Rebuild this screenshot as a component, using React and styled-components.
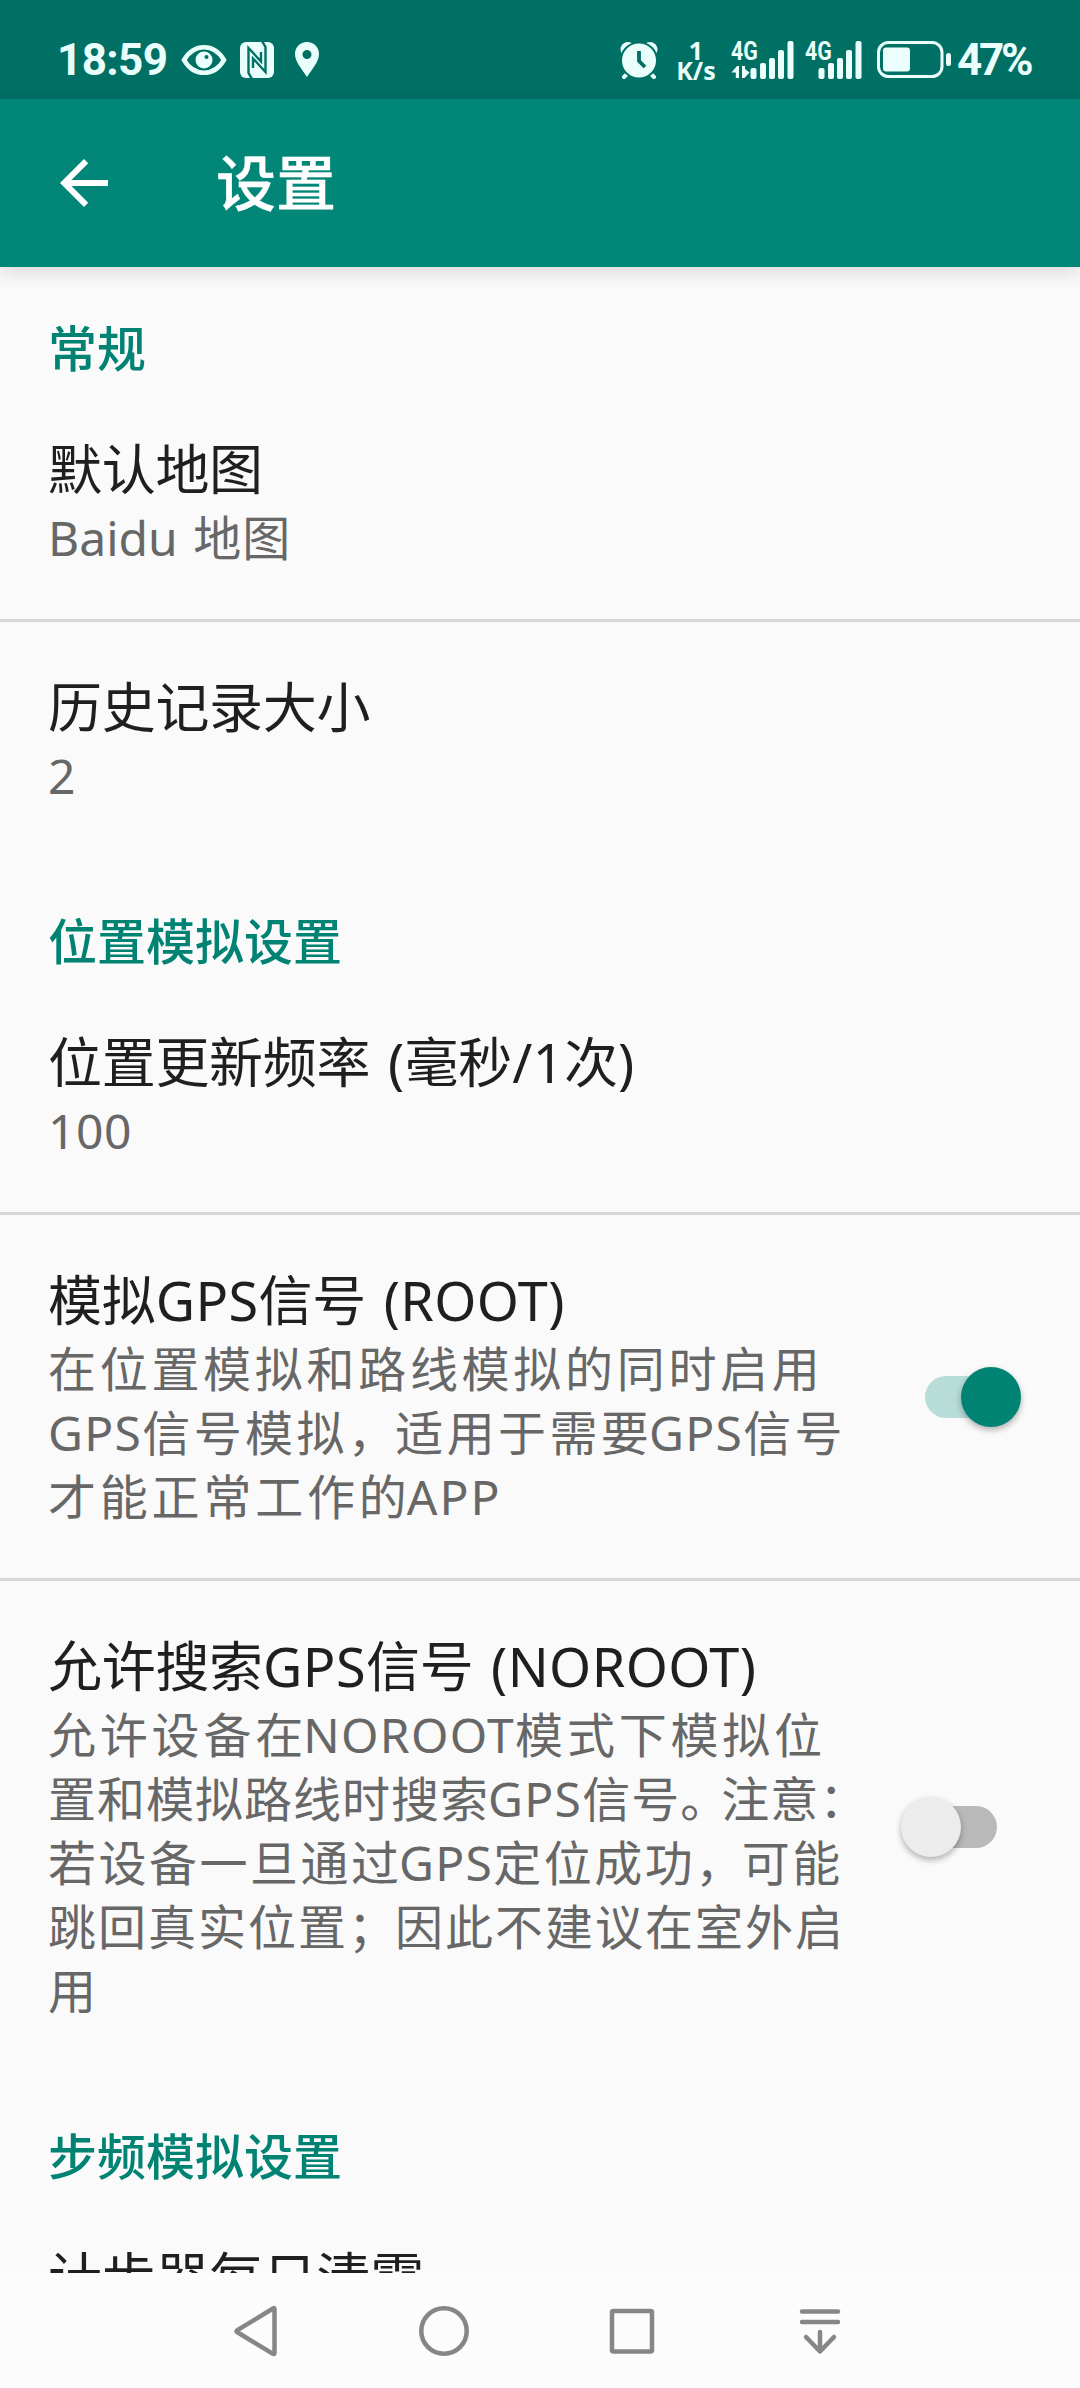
import React from "react";
import styled, { createGlobalStyle } from "styled-components";

const GlobalStyle = createGlobalStyle`
  * {
    box-sizing: border-box;
  }

  body {
    margin: 0;
    background-color: #fafafa;
    font-family: "Noto Sans", "Noto Sans CJK SC", sans-serif;
  }
`;

const Screen = styled.div`
  width: 1080px;
  height: 2388px;
  display: flex;
  flex-direction: column;
  overflow: hidden;
  background-color: #fafafa;
`;

const StatusBar = styled.div`
  height: 99px;
  flex-shrink: 0;
  padding: 20px 47px 0 57px;
  display: flex;
  align-items: center;
  justify-content: space-between;
  background-color: #007065;
  color: #eafffc;
  font-family: Roboto, sans-serif;
`;

const StatusGroup = styled.div`
  display: flex;
  align-items: center;
`;

const Clock = styled.span`
  width: 124px;
  font-size: 44px;
  font-weight: 700;
  line-height: 60px;
  letter-spacing: -0.6px;
  white-space: nowrap;
`;

const StatusIcon = styled.svg`
  display: block;
  flex-shrink: 0;
  margin-left: ${(props) => props.$gap || 0}px;
`;

const Speed = styled.div`
  width: 42px;
  margin-left: 17px;
  display: flex;
  flex-direction: column;
  align-items: center;
  font-family: "Noto Sans", sans-serif;
  font-size: 25px;
  font-weight: 700;
  line-height: 20px;
`;

const Signal = styled.div`
  width: 63px;
  height: 38px;
  margin-left: ${(props) => props.$gap}px;
  display: grid;
`;

const SignalLabel = styled.span`
  grid-area: 1 / 1;
  margin-left: ${(props) => props.$indent || 0}px;
  font-size: 26px;
  font-weight: 700;
  line-height: 20px;
  transform: scaleX(0.82);
  transform-origin: left;
`;

const SignalBars = styled.svg`
  grid-area: 1 / 1;
`;

const Percent = styled.span`
  width: 76px;
  margin-left: 5px;
  font-size: 44px;
  font-weight: 700;
  line-height: 60px;
  letter-spacing: -3.2px;
  white-space: nowrap;
`;

const AppBar = styled.header`
  height: 168px;
  flex-shrink: 0;
  padding-left: 60px;
  display: flex;
  align-items: center;
  background-color: #018677;
  box-shadow: 0 4px 20px rgba(0, 0, 0, 0.15);
  z-index: 1;
`;

const Title = styled.h1`
  margin: 0 0 0 108px;
  color: white;
  font-size: 60px;
  font-weight: 500;
  line-height: 80px;
  -webkit-text-stroke: 0.4px white;
`;

const List = styled.main`
  flex: 1;
  min-height: 0;
  overflow: hidden;
`;

const SectionTitle = styled.h2`
  margin: 0;
  padding: 49px 48px 4px;
  color: #018374;
  font-size: 49px;
  font-weight: 500;
  line-height: 64px;
`;

const Row = styled.div`
  padding-left: 48px;
  display: flex;
  align-items: center;
  border-bottom: 3px solid ${(props) => (props.$last ? "transparent" : "#d6d6d6")};
`;

const RowText = styled.div`
  width: 853px;
  padding: 53px 0 49px;
`;

const RowTitle = styled.div`
  margin-bottom: 5px;
  color: #1f1f1f;
  font-size: 54px;
  line-height: 64px;
  letter-spacing: -0.3px;
  white-space: pre;
`;

const Line = styled.div`
  height: 64px;
  color: #676767;
  font-size: 48px;
  line-height: 64px;
  letter-spacing: ${(props) => props.$spacing}px;
  white-space: pre;
`;

const Latin = styled.span`
  margin-left: ${(props) => -props.$pull}px;
  letter-spacing: ${(props) => props.$spacing}px;
  word-spacing: 3px;
`;

const Mark = styled.span`
  letter-spacing: ${(props) => props.$spacing}px;
`;

const Switch = styled.div`
  width: 120px;
  height: 60px;
  display: flex;
  align-items: center;
  justify-content: center;
`;

const Track = styled.div`
  width: 72px;
  height: 42px;
  display: flex;
  align-items: center;
  justify-content: ${(props) => (props.$on ? "flex-end" : "flex-start")};
  border-radius: 21px;
  background-color: ${(props) => (props.$on ? "#b8dcd8" : "#b9b9b9")};
`;

const Thumb = styled.div`
  width: 60px;
  height: 60px;
  flex-shrink: 0;
  margin: 0 -24px;
  border-radius: 50%;
  background-color: ${(props) => (props.$on ? "#018374" : "#ececec")};
  box-shadow: 0 3px 6px rgba(0, 0, 0, 0.3);
`;

const NavBar = styled.nav`
  height: 115px;
  flex-shrink: 0;
  padding-right: 4px;
  display: flex;
  align-items: center;
  justify-content: center;
  gap: 128px;
  background-color: #fcfcfc;
`;

const NavIcon = styled.svg`
  width: 60px;
  height: 60px;
  fill: none;
  stroke: #868686;
  stroke-width: 4.5;
  stroke-linecap: round;
  stroke-linejoin: round;
`;

const sections = [
  {
    title: "常规",
    rows: [
      { title: "默认地图", lines: [["Baidu 地图", 1, 0]] },
      { title: "历史记录大小", lines: [["2", 0, 0]] },
    ],
  },
  {
    title: "位置模拟设置",
    rows: [
      { title: "位置更新频率 (毫秒/1次)", lines: [["100", 0, 0.5]] },
      {
        title: "模拟GPS信号 (ROOT)",
        lines: [
          ["在位置模拟和路线模拟的同时启用", 3.7, 1.3],
          ["GPS信号模拟，适用于需要GPS信号", 3.4, 1.3],
          ["才能正常工作的APP", 3.8, 2],
        ],
        on: true,
      },
      {
        title: "允许搜索GPS信号 (NOROOT)",
        lines: [
          ["允许设备在NOROOT模式下模拟位", 3.8, 1.3],
          ["置和模拟路线时搜索GPS信号。注意：", 1, 1.3],
          ["若设备一旦通过GPS定位成功，可能", 2.5, 1.3],
          ["跳回真实位置；因此不建议在室外启", 2, 1.3],
          ["用", 0, 0],
        ],
        on: false,
      },
    ],
  },
  {
    title: "步频模拟设置",
    rows: [{ title: "计步器每日清零", lines: [] }],
  },
];

const kerning = { "。": -8, "，": -4, "；": -3 };

// Latin words and full-width marks get their own tracking
const MixedText = ({ text, spacing, latin }) =>
  text.split(/([A-Za-z0-9/() ]+|[。，；])/).map((part, i, parts) => {
    if (kerning[part]) {
      return (
        <Mark key={i} $spacing={spacing + kerning[part]}>
          {part}
        </Mark>
      );
    }
    if (i % 2) {
      return (
        <Latin key={i} $spacing={latin} $pull={parts[i - 1] ? spacing : 0}>
          {part}
        </Latin>
      );
    }
    return part;
  });

const Bars = ({ arrows }) => (
  <SignalBars width="63" height="38" viewBox="0 0 63 38" fill="currentColor">
    {arrows && <path d="M0.500 31.500L6 25h2v12H4.800v-5.500zM11 25h3v3l4.500 3.500L13.500 37H11z" />}
    <rect x="19.500" y="27" width="6" height="11" rx="2" />
    <rect x="29" y="22" width="6" height="16" rx="2" />
    <rect x="38" y="17" width="6" height="21" rx="2" />
    <rect x="47" y="9" width="6" height="29" rx="2" />
    <rect x="56.500" y="0" width="6" height="38" rx="2" />
  </SignalBars>
);

const App = () => {
  return (
    <>
      <GlobalStyle />
      <Screen>
        <StatusBar>
          <StatusGroup>
            <Clock>18:59</Clock>
            <StatusIcon width="46" height="32" viewBox="0 0 46 32">
              <path
                d="M3 16C13-1 33-1 43 16 33 33 13 33 3 16z"
                fill="none"
                stroke="currentColor"
                strokeWidth="4.500"
              />
              <circle cx="23" cy="16" r="8.500" fill="currentColor" />
              <circle cx="25.500" cy="13" r="2" fill="#007065" />
            </StatusIcon>
            <StatusIcon $gap={13} width="34" height="36" viewBox="0 0 34 36">
              <rect width="34" height="36" rx="6" fill="currentColor" />
              <path
                d="M12 37L8.500 31V6L21 19.500V10M22 -1L25.500 5V30L13 16.500V26"
                fill="none"
                stroke="#007065"
                strokeWidth="2.400"
              />
            </StatusIcon>
            <StatusIcon $gap={21} width="24" height="35" viewBox="0 0 24 35">
              <path
                d="M12 0C5 0 0 5 0 12c0 8 7 15 12 23 5-8 12-15 12-23C24 5 19 0 12 0zm0 8a4.500 4.500 0 110 9 4.500 4.500 0 010-9z"
                fill="currentColor"
              />
            </StatusIcon>
          </StatusGroup>
          <StatusGroup>
            <StatusIcon width="38" height="38" viewBox="0 0 38 38">
              <path
                d="M8 32l-4 4M30 32l4 4"
                stroke="currentColor"
                strokeWidth="4"
                strokeLinecap="round"
              />
              <circle cx="8" cy="8.500" r="7.500" fill="currentColor" />
              <circle cx="30" cy="8.500" r="7.500" fill="currentColor" />
              <circle cx="19" cy="19.500" r="18" fill="currentColor" stroke="#007065" strokeWidth="2" />
              <path d="M19 10v10l6 6" fill="none" stroke="#007065" strokeWidth="3.800" />
            </StatusIcon>
            <Speed>
              <span>1</span>
              <span>K/s</span>
            </Speed>
            <Signal $gap={14}>
              <SignalLabel>4G</SignalLabel>
              <Bars arrows />
            </Signal>
            <Signal $gap={4.5}>
              <SignalLabel $indent={6}>4G</SignalLabel>
              <Bars />
            </Signal>
            <StatusIcon $gap={15.5} width="75" height="37" viewBox="0 0 75 37">
              <rect
                x="1.500"
                y="1.500"
                width="63.500"
                height="34"
                rx="10"
                fill="none"
                stroke="currentColor"
                strokeWidth="3"
              />
              <rect x="6" y="6.500" width="27" height="24" rx="3" fill="currentColor" />
              <rect x="69" y="12" width="5" height="13" rx="2.500" fill="currentColor" />
            </StatusIcon>
            <Percent>47%</Percent>
          </StatusGroup>
        </StatusBar>
        <AppBar>
          <svg width="48" height="48" viewBox="4 4 16 16" fill="white">
            <path d="M20 11H7.830l5.590-5.590L12 4l-8 8 8 8 1.410-1.410L7.830 13H20v-2z" />
          </svg>
          <Title>设置</Title>
        </AppBar>
        <List>
          {sections.map((section) => (
            <section key={section.title}>
              <SectionTitle>{section.title}</SectionTitle>
              {section.rows.map((row, i) => (
                <Row key={row.title} $last={i === section.rows.length - 1}>
                  <RowText>
                    <RowTitle>
                      <MixedText text={row.title} spacing={-0.3} latin={0.4} />
                    </RowTitle>
                    {row.lines.map(([text, spacing, latin]) => (
                      <Line key={text} $spacing={spacing}>
                        <MixedText text={text} spacing={spacing} latin={latin} />
                      </Line>
                    ))}
                  </RowText>
                  {row.on !== undefined && (
                    <Switch role="switch" aria-checked={row.on}>
                      <Track $on={row.on}>
                        <Thumb $on={row.on} />
                      </Track>
                    </Switch>
                  )}
                </Row>
              ))}
            </section>
          ))}
        </List>
        <NavBar>
          <NavIcon viewBox="0 0 60 60">
            <path d="M48.500 8v44q0 1.500-1.500.800L11 31q-1-.800 0-1.600L47 7.500q1.500-1 1.500.500z" />
          </NavIcon>
          <NavIcon viewBox="0 0 60 60">
            <circle cx="30" cy="30" r="22.700" />
          </NavIcon>
          <NavIcon viewBox="0 0 60 60">
            <rect x="10" y="10" width="40" height="40.500" rx="1.500" />
          </NavIcon>
          <NavIcon viewBox="0 0 60 60">
            <path d="M12 10.500h36M12 21h36M30 31v19M16 36l14 14.500L44 36" />
          </NavIcon>
        </NavBar>
      </Screen>
    </>
  );
};

export default App;
